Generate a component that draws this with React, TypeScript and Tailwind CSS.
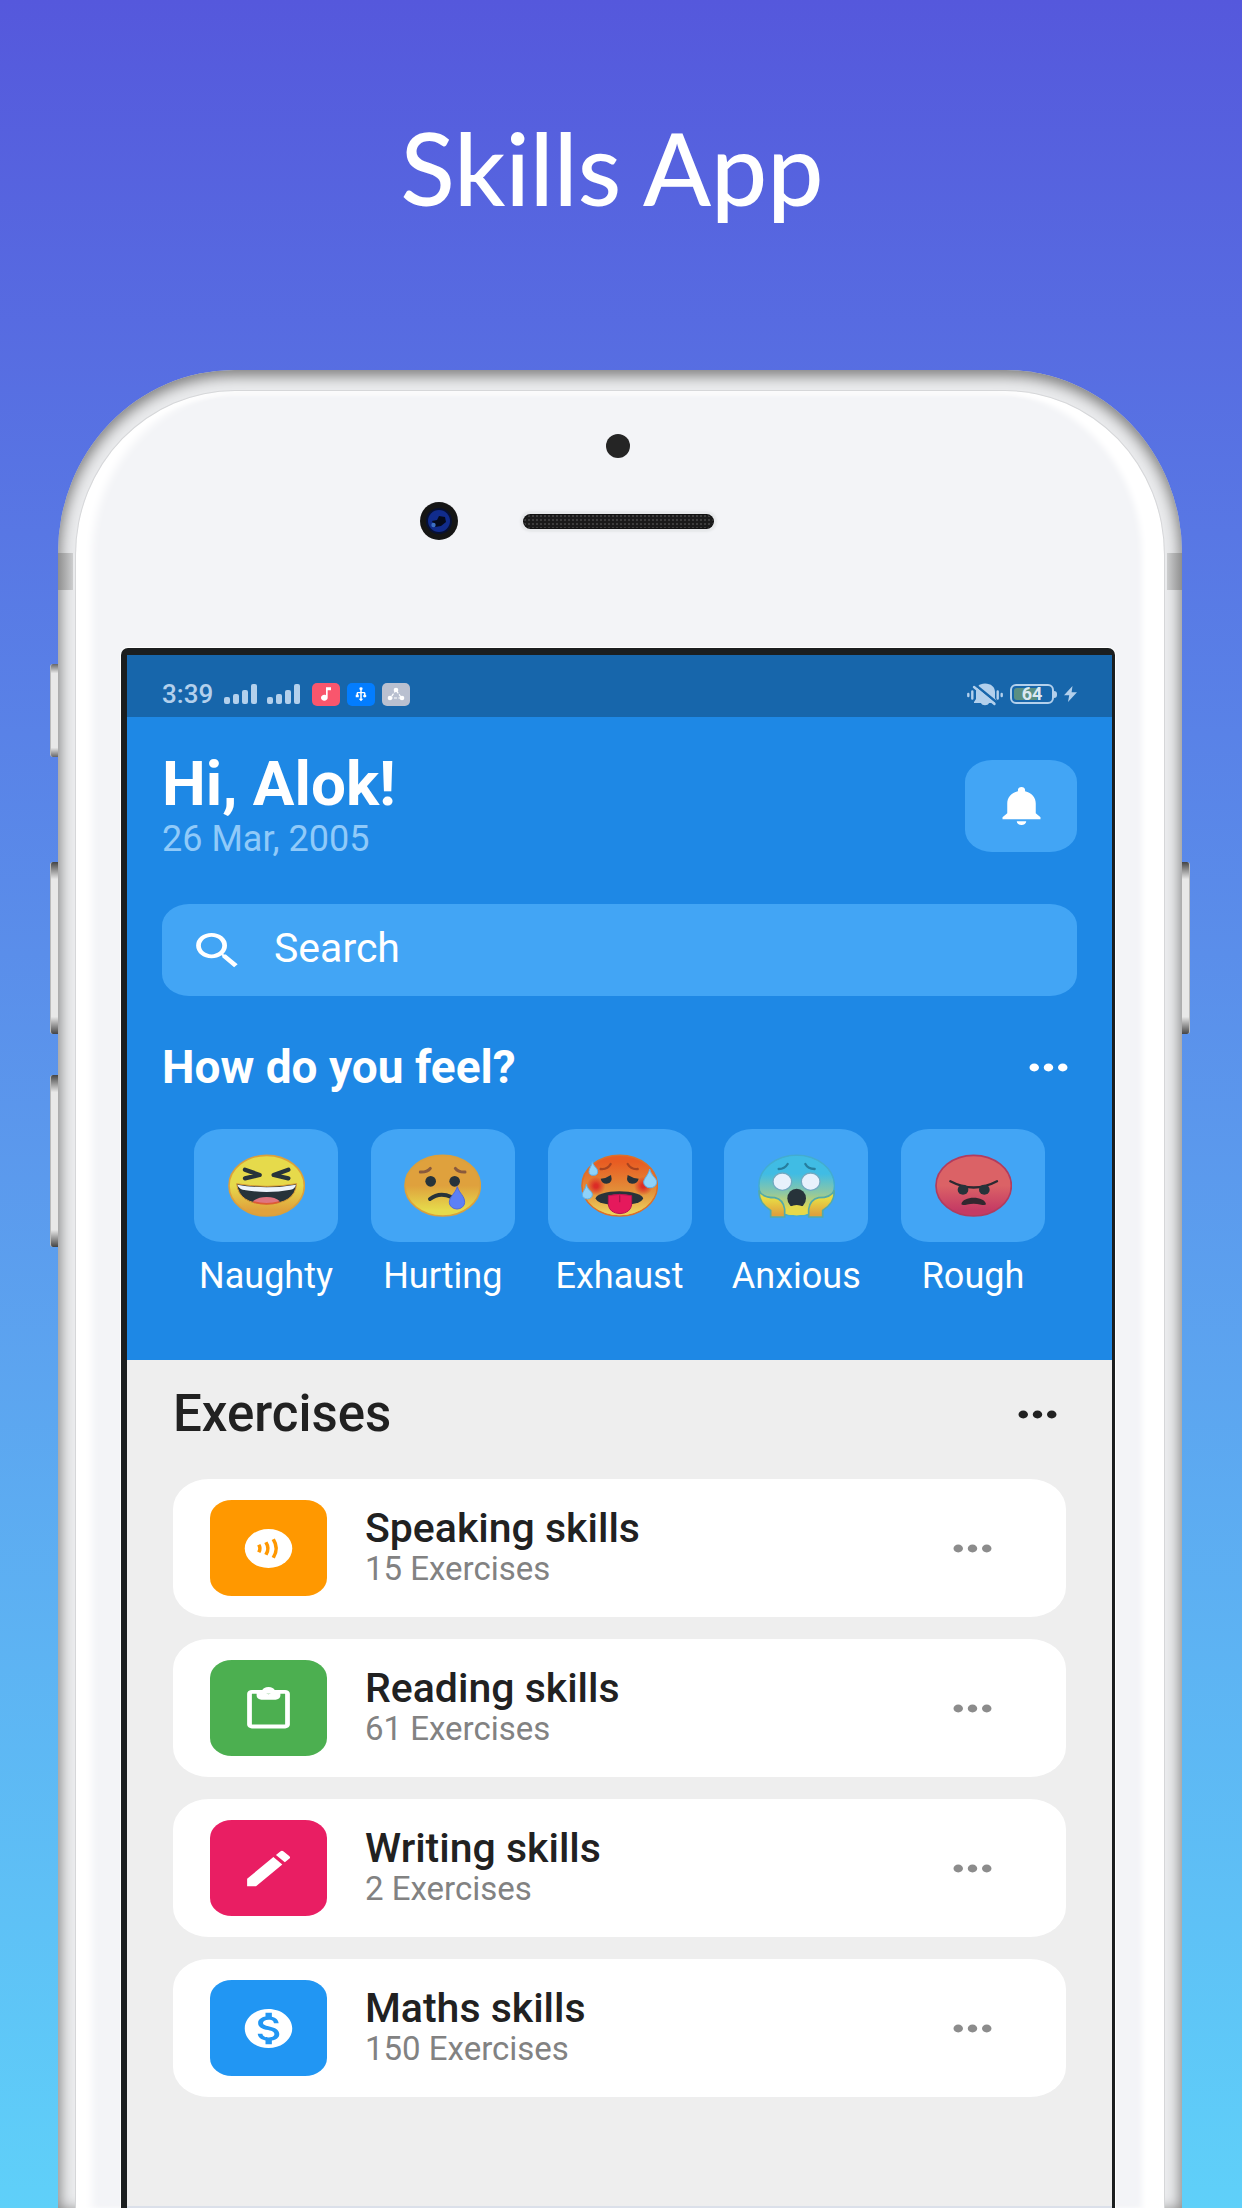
import type { ReactNode } from "react";
import {
  MdEdit,
  MdMonetizationOn,
  MdMoreHoriz,
  MdMusicNote,
  MdNotifications,
  MdSearch,
  MdUsb,
} from "react-icons/md";

const wide = { preserveAspectRatio: "none", "aria-hidden": true } as const;

function MoreButton({ label, className }: { label: string; className: string }) {
  return (
    <button type="button" aria-label={label} className={className}>
      <MdMoreHoriz {...wide} className="h-[47px] w-[57px]" />
    </button>
  );
}

function Signal() {
  return (
    <svg viewBox="0 0 34 20" className="h-5 w-[34px]" fill="#b3d0ec" aria-hidden="true">
      <rect x="0" y="13" width="6" height="7" rx="2" />
      <rect x="9" y="10" width="6" height="10" rx="2" />
      <rect x="18" y="6" width="6" height="14" rx="2" />
      <rect x="27" y="0" width="6" height="20" rx="2" />
    </svg>
  );
}

function StatusBar() {
  return (
    <div className="flex h-[62px] items-center justify-between bg-[#1766ab] px-[35px] pt-4 text-[#b3d0ec]">
      <div className="flex items-center">
        <span className="text-[26px] leading-7 font-medium">3:39</span>
        <span className="ml-[11px] flex gap-[9px]">
          <Signal />
          <Signal />
        </span>
        <span className="ml-[11px] flex gap-[7px] text-white">
          <span className="flex h-[23px] w-7 items-center justify-center rounded-[5px] bg-[#f9566d]">
            <MdMusicNote {...wide} className="h-[18px] w-5" />
          </span>
          <span className="flex h-[23px] w-7 items-center justify-center rounded-[5px] bg-[#037dff]">
            <MdUsb {...wide} className="h-4 w-[18px] rotate-180" />
          </span>
          <span className="flex h-[23px] w-7 items-center justify-center rounded-[5px] bg-[#b9c0d0]">
            <svg viewBox="0 0 18 14" className="h-3.5 w-[18px]" aria-hidden="true">
              <path d="M9 3 3.5 11H14.5Z" fill="none" stroke="#fff" strokeWidth="1.2" strokeDasharray="3 1.4" />
              <circle cx="9" cy="3" r="2.3" fill="#fff" />
              <circle cx="3" cy="11" r="2.300" fill="#fff" />
              <circle cx="15" cy="11" r="2.300" fill="#fff" />
            </svg>
          </span>
        </span>
      </div>
      <div className="flex items-center">
        <svg viewBox="0 0 36 23" className="h-[23px] w-9" aria-hidden="true">
          <g stroke="#b3d0ec" strokeWidth="2.4" strokeLinecap="round">
            <path d="M1.3 11v2M5.3 8.500v7M30.7 8.500v7M34.7 11v2" />
          </g>
          <path
            fill="#b3d0ec"
            d="M18 0.500c6 0 10 3.500 10 8.500v6l2 4v1H7v-1l2-3V9c0-5 3-8.500 9-8.500ZM14 20h8c-1 3-7 3-8 0Z"
          />
          <path d="M9 2.500 31 20.500" stroke="#1766ab" strokeWidth="2.6" />
          <path d="M7 4 27.500 21" stroke="#b3d0ec" strokeWidth="2.400" strokeLinecap="round" />
        </svg>
        <span className="ml-[7px] flex h-5 w-[44px] rounded-[6px] border-2 border-[#b3d0ec] p-0.5">
          <span className="flex w-full items-center justify-center rounded-[3px] bg-linear-to-r from-[#5a8f82] from-64% to-transparent to-64% text-[18px] leading-4 font-bold text-[#dbe9f2]">
            64
          </span>
        </span>
        <span className="h-[7px] w-[3px] rounded-r-full bg-[#b3d0ec]" />
        <svg viewBox="0 0 13 16" className="ml-[7px] h-4 w-[13px]" fill="#b3d0ec" aria-hidden="true">
          <path d="M8.500 0 0 9.200h5.200L4 16l9-9.700H7.600Z" />
        </svg>
      </div>
    </div>
  );
}

function Face({ id, top, bottom, edge, children }: { id: string; top: string; bottom: string; edge: string; children: ReactNode }) {
  return (
    <svg viewBox="0 0 231 190" className="h-16 w-[77px]" aria-hidden="true">
      <defs>
        <linearGradient id={id} x1="0" x2="0" y1="0" y2="1">
          <stop offset="0.5" stopColor={top} />
          <stop offset="0.9" stopColor={bottom} />
        </linearGradient>
      </defs>
      <ellipse cx="116" cy="94" rx="113" ry="91" fill={`url(#${id})`} stroke={edge} strokeWidth="5" />
      {children}
    </svg>
  );
}

function NaughtyFace() {
  return (
    <Face id="naughty" top="#e6da4b" bottom="#e0a23c" edge="#dba03c">
      <path d="M51 46 95 62 51 72M181 46 137 62 181 72" fill="none" stroke="#27333a" strokeWidth="13" strokeLinecap="round" strokeLinejoin="round" />
      <path d="M26 88Q116 104 206 88Q200 149 116 149Q32 149 26 88Z" fill="#27333a" stroke="#dc9b35" strokeWidth="3" />
      <path d="M28 91Q116 107 204 91Q200 104 188 106Q116 120 44 106Q32 102 28 91Z" fill="#eef4fb" />
      <path d="M74 141Q90 128 116 128Q142 128 156 141Q138 149 116 149Q92 149 74 141Z" fill="#df7580" />
      <path d="M76 143Q116 154 154 143" fill="none" stroke="#dd5a35" strokeWidth="5" />
    </Face>
  );
}

function HurtingFace() {
  return (
    <Face id="hurting" top="#dfa13d" bottom="#e6da4b" edge="#dba03c">
      <path d="M49 53Q70 54 79 42M154 42Q163 54 183 53" fill="none" stroke="#8a5a3c" strokeWidth="9" strokeLinecap="round" />
      <circle cx="80" cy="81" r="16" fill="#27333a" />
      <circle cx="152" cy="81" r="16" fill="#27333a" />
      <path d="M78 134Q106 112 142 128" fill="none" stroke="#27333a" strokeWidth="12" strokeLinecap="round" />
      <path d="M160 97C166 118 182 124 182 144A23 20 0 0 1 136 144C136 126 154 118 160 97Z" fill="#5c80f6" stroke="#5369d8" strokeWidth="3" />
    </Face>
  );
}

function ExhaustFace() {
  return (
    <Face id="exhaust" top="#e66327" bottom="#eac253" edge="#dc7029">
      <defs>
        <linearGradient id="exhaust-fill" x1="0" x2="0" y1="0" y2="1">
          <stop offset="0.1" stopColor="#e85c22" />
          <stop offset="0.6" stopColor="#e2913a" />
          <stop offset="0.95" stopColor="#ecd05c" />
        </linearGradient>
        <radialGradient id="exhaust-cheek">
          <stop offset="0.2" stopColor="#dc2c26" />
          <stop offset="1" stopColor="#dc2c26" stopOpacity="0" />
        </radialGradient>
      </defs>
      <ellipse cx="116" cy="94" rx="111" ry="89" fill="url(#exhaust-fill)" />
      <circle cx="45" cy="95" r="28" fill="url(#exhaust-cheek)" />
      <circle cx="187" cy="95" r="28" fill="url(#exhaust-cheek)" />
      <path d="M59 44Q80 46 89 29M140 29Q150 46 170 44" fill="none" stroke="#a84420" strokeWidth="7" strokeLinecap="round" />
      <path d="M59 73Q76 72 90 62Q97 87 77 88Q62 88 59 73ZM173 73Q156 72 140 62Q133 87 153 88Q170 88 173 73Z" fill="#27333a" />
      <ellipse cx="115" cy="132" rx="71" ry="21" fill="#27333a" />
      <path d="M82 124Q116 116 152 124V152Q148 176 117 178Q86 176 82 152Z" fill="#e5195c" stroke="#b91450" strokeWidth="3" />
      <path d="M116 124v18" stroke="#b0124a" strokeWidth="4" strokeLinecap="round" />
      <path d="M34 22C38 38 50 40 50 52A13 11 0 0 1 24 52C24 42 32 36 34 22ZM206 44C212 68 227 70 227 84A19 16 0 0 1 188 84C188 72 202 64 206 44ZM16 90C20 108 34 110 34 121A15 13 0 0 1 4 121C4 112 14 106 16 90Z" fill="#8ed2fa" stroke="#5eb2ec" strokeWidth="3" />
    </Face>
  );
}

function AnxiousFace() {
  return (
    <Face id="anxious" top="#43bde3" bottom="#e8dd45" edge="#43acd0">
      <defs>
        <linearGradient id="anxious-fill" x1="0" x2="0" y1="0" y2="1">
          <stop offset="0.3" stopColor="#40bce4" />
          <stop offset="0.62" stopColor="#8cc7a4" />
          <stop offset="0.9" stopColor="#e6d94a" />
        </linearGradient>
        <linearGradient id="anxious-hand" x1="0" x2="0" y1="0" y2="1">
          <stop offset="0.3" stopColor="#e8db45" />
          <stop offset="0.9" stopColor="#e0a23c" />
        </linearGradient>
      </defs>
      <ellipse cx="116" cy="94" rx="111" ry="89" fill="url(#anxious-fill)" />
      <path d="M62 44Q80 44 89 29M142 29Q150 44 170 44" fill="none" stroke="#267e9e" strokeWidth="7" strokeLinecap="round" />
      <ellipse cx="73" cy="82" rx="28" ry="26" fill="#e7f1fc" stroke="#72a9c0" strokeWidth="4" />
      <ellipse cx="158" cy="82" rx="28" ry="26" fill="#e7f1fc" stroke="#72a9c0" strokeWidth="4" />
      <ellipse cx="116" cy="132" rx="28" ry="29" fill="#27333a" />
      <path d="M96 157Q116 147 136 157V162H96Z" fill="#e6d94a" />
      <path
        d="M3 108C10 125 30 130 50 130Q76 136 80 164V188H38V168C16 154 2 138 3 108ZM229 108C222 125 202 130 182 130Q156 136 152 164V188H194V168C216 154 230 138 229 108Z"
        fill="url(#anxious-hand)"
        stroke="#54aaa8"
        strokeWidth="5"
      />
    </Face>
  );
}

function RoughFace() {
  return (
    <Face id="rough" top="#db6266" bottom="#c53b64" edge="#b13c5e">
      <path d="M46 81Q116 118 186 81" fill="none" stroke="#2c2a31" strokeWidth="7" strokeLinecap="round" />
      <ellipse cx="84" cy="106" rx="16" ry="15" fill="#27333a" />
      <ellipse cx="148" cy="106" rx="16" ry="15" fill="#27333a" />
      <path d="M79 150C82 124 150 124 153 150C148 156 136 148 116 148C96 148 84 156 79 150Z" fill="#33272f" />
    </Face>
  );
}

type IconProps = { className?: string; preserveAspectRatio?: string };

function WavesIcon(props: IconProps) {
  return (
    <svg viewBox="0 0 24 24" {...props} aria-hidden="true">
      <circle cx="12" cy="12" r="10" fill="currentColor" />
      <g fill="none" stroke="#ff9800" strokeWidth="1.5">
        <path d="M7.900 10.100Q8.900 12 7.900 13.900M10.900 8.800Q12.600 12 10.900 15.200M14 7.300Q16.500 12 14 16.700" />
      </g>
    </svg>
  );
}

function ClipboardIcon(props: IconProps) {
  return (
    <svg viewBox="0 0 24 24" {...props} aria-hidden="true">
      <rect x="4" y="3.500" width="16" height="17.700" rx="1" fill="none" stroke="currentColor" strokeWidth="2" />
      <path
        fill="currentColor"
        fillRule="evenodd"
        d="M7 3h2.200a3 3 0 0 1 5.600 0H17v2.500a2 2 0 0 1-2 2H9a2 2 0 0 1-2-2ZM12 2.700a1 1 0 1 0 0 2 1 1 0 0 0 0-2Z"
      />
    </svg>
  );
}

const moods: { name: string; Art: () => ReactNode }[] = [
  { name: "Naughty", Art: NaughtyFace },
  { name: "Hurting", Art: HurtingFace },
  { name: "Exhaust", Art: ExhaustFace },
  { name: "Anxious", Art: AnxiousFace },
  { name: "Rough", Art: RoughFace },
];

const skills: { name: string; count: number; Icon: (props: IconProps) => ReactNode; color: string }[] = [
  { name: "Speaking skills", count: 15, Icon: WavesIcon, color: "bg-[#ff9800]" },
  { name: "Reading skills", count: 61, Icon: ClipboardIcon, color: "bg-[#4caf50]" },
  { name: "Writing skills", count: 2, Icon: MdEdit, color: "bg-[#e91e63]" },
  { name: "Maths skills", count: 150, Icon: MdMonetizationOn, color: "bg-[#2196f3]" },
];

function Hero() {
  return (
    <section className="bg-[#1e88e5] px-[35px] pt-[35px] pb-16 text-white">
      <div className="flex items-center justify-between">
        <div className="pt-0.5">
          <h2 className="text-[62px] leading-[60px] font-bold">Hi, Alok!</h2>
          <p className="mt-[5px] text-[36px] leading-10 text-[#90caf9]">26 Mar, 2005</p>
        </div>
        <button
          type="button"
          aria-label="Notifications"
          className="flex h-[92px] w-[112px] items-center justify-center rounded-[27px/22px] bg-[#42a5f5]"
        >
          <MdNotifications {...wide} className="h-[47px] w-[57px]" />
        </button>
      </div>
      <label className="mt-[45px] flex h-[92px] items-center gap-7 rounded-[27px/22px] bg-[#42a5f5] px-[27px]">
        <MdSearch {...wide} className="h-[47px] w-[57px]" />
        <input
          type="text"
          aria-label="Search"
          placeholder="Search"
          className="min-w-0 flex-1 bg-transparent pb-1 text-[41px] leading-[48px] outline-none placeholder:text-white"
        />
      </label>
      <div className="mt-[45px] flex h-[52px] items-center justify-between">
        <h3 className="text-[46px] leading-[52px] font-bold">How do you feel?</h3>
        <MoreButton label="More moods" className="text-white" />
      </div>
      <ul className="mt-9 flex justify-between px-8">
        {moods.map(({ name, Art }) => (
          <li key={name}>
            <button type="button" className="flex w-36 flex-col items-center gap-3.5">
              <span className="flex h-[113px] w-full items-center justify-center rounded-[28px/23px] bg-[#42a5f5]">
                <Art />
              </span>
              <span className="text-[36px] leading-10">{name}</span>
            </button>
          </li>
        ))}
      </ul>
    </section>
  );
}

function Exercises() {
  return (
    <section className="flex-1 bg-[#eeeeee] px-[46px] pt-6 pb-[108px] text-[#212121]">
      <div className="flex h-[60px] items-center justify-between">
        <h2 className="text-[51px] leading-[60px] font-medium">Exercises</h2>
        <MoreButton label="More exercises" className="text-[#212121]" />
      </div>
      <ul className="mt-[35px] flex flex-col gap-[22px]">
        {skills.map(({ name, count, Icon, color }) => (
          <li key={name} className="flex h-[138px] items-center rounded-[36px/30px] bg-white pr-[65px] pl-[37px]">
            <span className={`flex h-24 w-[117px] items-center justify-center rounded-[22px/18px] text-white ${color}`}>
              <Icon {...wide} className="h-[47px] w-[57px]" />
            </span>
            <div className="ml-[38px] flex-1 pb-0.5">
              <h3 className="text-[41px] leading-[44px] font-medium">{name}</h3>
              <p className="text-[33px] leading-[38px] text-[#828282]">{count} Exercises</p>
            </div>
            <MoreButton label={`More about ${name}`} className="text-[#8c8c8c]" />
          </li>
        ))}
      </ul>
    </section>
  );
}

function Phone() {
  return (
    <div className="relative mr-[60px] ml-[58px] flex flex-1 flex-col">
      <span className="absolute top-[294px] -left-2 h-[93px] w-[10px] rounded-l-[3px] border-l border-[#bbb] bg-[linear-gradient(to_bottom,#666,#e8e8e8_10%,#e8e8e8_90%,#666)]" />
      <span className="absolute top-[492px] -left-2 h-[172px] w-[10px] rounded-l-[3px] border-l border-[#bbb] bg-[linear-gradient(to_bottom,#444,#e8e8e8_10%,#e8e8e8_90%,#444)]" />
      <span className="absolute top-[705px] -left-2 h-[172px] w-[10px] rounded-l-[3px] border-l border-[#bbb] bg-[linear-gradient(to_bottom,#444,#e8e8e8_10%,#e8e8e8_90%,#444)]" />
      <span className="absolute top-[492px] -right-2 h-[172px] w-[10px] rounded-r-[3px] border-r border-[#bbb] bg-[linear-gradient(to_bottom,#444,#e8e8e8_10%,#e8e8e8_90%,#444)]" />
      <div className="relative flex flex-1 flex-col bg-[#ebecee] px-[17px] pt-5 [border-top-left-radius:176px_183px] [border-top-right-radius:176px_183px] [box-shadow:inset_0_4px_14px_2px_#7f7f7f]">
        <span className="absolute top-[183px] left-0 h-[37px] w-[15px] bg-linear-to-r from-[#8f8f8f] to-[#cdcecf]" />
        <span className="absolute top-[183px] right-0 h-[37px] w-[15px] bg-linear-to-l from-[#8f8f8f] to-[#cdcecf]" />
        <div className="flex flex-1 flex-col border-x border-t border-[#d6d7d9] bg-[#f3f4f7] pt-[43px] pr-[49px] pl-[45px] [border-top-left-radius:160px_165px] [border-top-right-radius:160px_165px] [box-shadow:inset_20px_0_8px_-4px_#fff,inset_-24px_0_6px_-2px_#fff,inset_0_5px_3px_#fafafb]">
          <span className="size-6 self-center rounded-full bg-[#252525]" />
          <div className="mt-11 grid h-[38px] grid-cols-[1fr_auto_1fr] items-center">
            <svg viewBox="0 0 38 38" className="mr-[65px] size-[38px] justify-self-end" aria-hidden="true">
              <circle cx="19" cy="19" r="19" fill="#151515" />
              <circle cx="19" cy="19" r="13" fill="#071033" />
              <circle cx="19" cy="19" r="11" fill="#112c8c" />
              <path d="m19 14 6 1 1 5-5 4-6 1-3-6 5-1Z" fill="#050a1c" />
              <circle cx="13.500" cy="23" r="2.200" fill="#3c70c4" />
            </svg>
            <span className="h-[15px] w-[191px] rounded-full bg-[#1a1a1a] bg-[radial-gradient(#3d3d3d_1px,transparent_1.500px)] bg-size-[4px_4px] shadow-[0_0_0_1px_#111_inset,0_0_2px_3px_#e6e8ea]" />
          </div>
          <div className="mt-[108px] flex flex-1 flex-col overflow-hidden rounded-t-[7px] border-t-[7px] border-r-[3px] border-l-[6px] border-[#1b1e1f] shadow-[0_0_0_1px_#fff] [font-family:Roboto,sans-serif]">
            <StatusBar />
            <Hero />
            <Exercises />
            <div className="h-0.5 bg-[#dbe0ea]" />
          </div>
        </div>
      </div>
    </div>
  );
}

export default function App() {
  return (
    <main className="flex min-h-screen flex-col bg-linear-to-b from-[#5558dc] to-[#5fd0f9]">
      <header className="pt-[107px] pr-[18px] pb-[143px] text-center">
        <h1 className="text-[100px] leading-[120px] font-medium text-white [font-family:Lato,sans-serif]">Skills App</h1>
      </header>
      <Phone />
    </main>
  );
}
